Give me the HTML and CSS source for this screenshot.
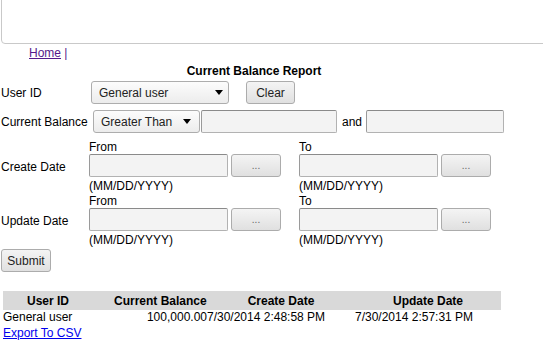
FILE: index.html
```html
<!DOCTYPE html>
<html>
<head>
<meta charset="utf-8">
<link rel="stylesheet" href="styles.css">
</head>
<body>
<div class="banner"></div>
<div class="nav"><a href="#" class="visited">Home</a> <span class="sep">|</span></div>
<div class="title">Current Balance Report</div>

<div class="row row-user">
  <div class="label l-user">User ID</div>
  <span class="sel sel-user"><span class="sel-text">General user</span></span>
  <button class="btn btn-clear">Clear</button>
</div>

<div class="row row-bal">
  <div class="label l-bal">Current Balance</div>
  <span class="sel sel-bal"><span class="sel-text">Greater Than</span></span>
  <input class="txt txt-bal1" type="text">
  <span class="and">and</span>
  <input class="txt txt-bal2" type="text">
</div>

<div class="row row-date row-create">
  <div class="label l-date">Create Date</div>
  <div class="dgroup">
    <div class="dcap">From</div>
    <div class="dline"><input class="txt txt-date" type="text"><button class="btn btn-dots">...</button></div>
    <div class="dfmt">(MM/DD/YYYY)</div>
  </div>
  <div class="dgroup">
    <div class="dcap">To</div>
    <div class="dline"><input class="txt txt-date" type="text"><button class="btn btn-dots">...</button></div>
    <div class="dfmt">(MM/DD/YYYY)</div>
  </div>
</div>

<div class="row row-date row-update">
  <div class="label l-date">Update Date</div>
  <div class="dgroup">
    <div class="dcap">From</div>
    <div class="dline"><input class="txt txt-date" type="text"><button class="btn btn-dots">...</button></div>
    <div class="dfmt">(MM/DD/YYYY)</div>
  </div>
  <div class="dgroup">
    <div class="dcap">To</div>
    <div class="dline"><input class="txt txt-date" type="text"><button class="btn btn-dots">...</button></div>
    <div class="dfmt">(MM/DD/YYYY)</div>
  </div>
</div>

<div class="row row-submit"><button class="btn btn-submit">Submit</button></div>

<table class="grid">
  <colgroup><col class="c1"><col class="c2"><col class="c3"><col class="c4"></colgroup>
  <thead>
    <tr><th class="h1">User ID</th><th class="h2">Current Balance</th><th class="h3">Create Date</th><th class="h4">Update Date</th></tr>
  </thead>
  <tbody>
    <tr><td class="d1">General user</td><td class="d2">100,000.00</td><td class="d3">7/30/2014 2:48:58 PM</td><td class="d4">7/30/2014 2:57:31 PM</td></tr>
  </tbody>
</table>
<div class="export"><a href="#">Export To CSV</a></div>
</body>
</html>
```

FILE: styles.css
```css
html, body {
  margin: 0;
  padding: 0;
  background: #fff;
  overflow: hidden;
}
body {
  font-family: "Liberation Sans", Arial, sans-serif;
  font-size: 12px;
  color: #000;
  width: 543px;
  height: 362px;
}
.banner {
  margin: -6px -10px 0 1px;
  height: 48px;
  border: 1px solid #c9c9c9;
  border-radius: 4px;
}
.nav {
  padding-left: 29px;
  line-height: 14px;
  height: 14px;
  margin-top: 2px;
}
.nav a.visited { color: #551a8b; }
.nav .sep { color: #551a8b; }
.title {
  width: 508px;
  text-align: center;
  font-weight: bold;
  line-height: 14px;
  margin-top: 4px;
}
.row {
  display: flex;
  align-items: center;
}
.label {
  padding-left: 1px;
  white-space: nowrap;
}
.row-user { margin-top: 3px; height: 23px; }
.l-user { width: 90px; }
.row-bal { margin-top: 6px; height: 23px; }
.l-bal { width: 92px; }

.sel {
  position: relative;
  display: inline-flex;
  align-items: center;
  box-sizing: border-box;
  height: 23px;
  border: 1px solid #adadad;
  border-radius: 3px;
  background: linear-gradient(#fcfcfc, #ececec);
  color: #222;
}
.sel::after {
  content: "";
  position: absolute;
  top: 8px;
  border-left: 4px solid transparent;
  border-right: 4px solid transparent;
  border-top: 5px solid #000;
}
.sel-user::after { right: 5px; }
.sel-bal::after { right: 8px; }
.sel-text { padding-left: 7px; }
.sel-user { width: 138px; }
.sel-bal { width: 107px; }

.btn {
  box-sizing: border-box;
  height: 23px;
  border: 1px solid #acacac;
  border-radius: 3px;
  background: linear-gradient(#f4f4f4, #e0e0e0);
  font-family: "Liberation Sans", Arial, sans-serif;
  font-size: 12px;
  color: #222;
  padding: 0;
}
.btn-clear { width: 49px; margin-left: 17px; }
.btn-dots { width: 50px; margin-left: 3px; color: #666; font-size: 10px; }
.btn-submit { width: 50px; margin-left: 1px; }

.txt {
  box-sizing: border-box;
  height: 23px;
  border: 1px solid #b2b2b2;
  border-top-color: #8a8a8a;
  border-left-color: #9a9a9a;
  border-radius: 2px;
  background: #f3f3f3;
  padding: 0 3px;
  font-family: "Liberation Sans", Arial, sans-serif;
  font-size: 12px;
}
.txt-bal1 { width: 136px; margin-left: 1px; }
.and { margin: 0 4px 0 5px; }
.txt-bal2 { width: 138px; }
.txt-date { width: 139px; }

.row-date { align-items: center; }
.row-create { margin-top: 8px; }
.row-update { margin-top: 2px; }
.l-date { width: 88px; }
.dgroup { width: 210px; }
.dcap { line-height: 13px; height: 13px; }
.dline { display: flex; height: 23px; }
.dfmt { line-height: 14px; margin-top: 2px; }

.row-submit { margin-top: 2px; }

.grid {
  margin: 19px 0 0 3px;
  border-collapse: collapse;
  table-layout: fixed;
  width: 498px;
  font-size: 12px;
}
.grid col.c1 { width: 115px; }
.grid col.c2 { width: 89px; }
.grid col.c3 { width: 148px; }
.grid col.c4 { width: 146px; }
.grid th, .grid td {
  padding: 0;
  white-space: nowrap;
  overflow: visible;
}
.grid thead tr { background: #d9d9d9; }
.grid th { height: 19px; font-weight: bold; }
.grid th.h1 { text-align: left; padding-left: 24px; }
.grid th.h2 { text-align: left; text-indent: -4px; }
.grid th.h3 { text-align: center; }
.grid th.h4 { text-align: center; }
.grid td { height: 15px; line-height: 15px; }
.grid td.d1 { text-align: left; }
.grid td.d2 { text-align: right; }
.grid td.d3 { text-align: left; }
.grid td.d4 { text-align: left; }
.export {
  margin-left: 3px;
  margin-top: 1px;
  line-height: 14px;
}
.export a { color: #0000ee; }
```
